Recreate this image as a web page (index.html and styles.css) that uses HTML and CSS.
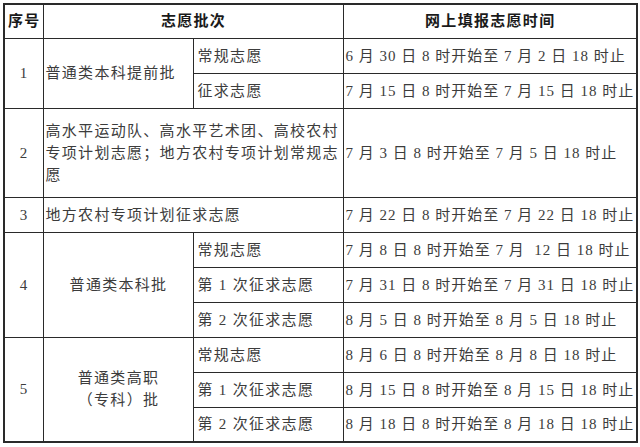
FILE: index.html
```html
<!DOCTYPE html>
<html lang="zh-CN">
<head>
<meta charset="utf-8">
<title>志愿填报时间</title>
<link rel="stylesheet" href="styles.css">
</head>
<body>
<table class="sched">
  <colgroup>
    <col class="c-no">
    <col class="c-batch">
    <col class="c-type">
    <col class="c-time">
  </colgroup>
  <thead>
    <tr class="r-head">
      <th>序号</th>
      <th colspan="2">志愿批次</th>
      <th>网上填报志愿时间</th>
    </tr>
  </thead>
  <tbody>
    <tr class="r-sub">
      <td class="no" rowspan="2">1</td>
      <td class="batch" rowspan="2">普通类本科提前批</td>
      <td class="type">常规志愿</td>
      <td class="time">6 月 30 日 8 时开始至 7 月 2 日 18 时止</td>
    </tr>
    <tr class="r-sub">
      <td class="type">征求志愿</td>
      <td class="time">7 月 15 日 8 时开始至 7 月 15 日 18 时止</td>
    </tr>
    <tr class="r-tall">
      <td class="no">2</td>
      <td class="batch wrap" colspan="2">高水平运动队、高水平艺术团、高校农村专项计划志愿；地方农村专项计划常规志愿</td>
      <td class="time">7 月 3 日 8 时开始至 7 月 5 日 18 时止</td>
    </tr>
    <tr class="r-sub">
      <td class="no">3</td>
      <td class="batch" colspan="2">地方农村专项计划征求志愿</td>
      <td class="time">7 月 22 日 8 时开始至 7 月 22 日 18 时止</td>
    </tr>
    <tr class="r-sub">
      <td class="no" rowspan="3">4</td>
      <td class="batch center" rowspan="3">普通类本科批</td>
      <td class="type">常规志愿</td>
      <td class="time">7 月 8 日 8 时开始至 7 月&nbsp; 12 日 18 时止</td>
    </tr>
    <tr class="r-sub">
      <td class="type">第 1 次征求志愿</td>
      <td class="time">7 月 31 日 8 时开始至 7 月 31 日 18 时止</td>
    </tr>
    <tr class="r-sub">
      <td class="type">第 2 次征求志愿</td>
      <td class="time">8 月 5 日 8 时开始至 8 月 5 日 18 时止</td>
    </tr>
    <tr class="r-sub">
      <td class="no" rowspan="3">5</td>
      <td class="batch center" rowspan="3">普通类高职<br>（专科）批</td>
      <td class="type">常规志愿</td>
      <td class="time">8 月 6 日 8 时开始至 8 月 8 日 18 时止</td>
    </tr>
    <tr class="r-sub">
      <td class="type">第 1 次征求志愿</td>
      <td class="time">8 月 15 日 8 时开始至 8 月 15 日 18 时止</td>
    </tr>
    <tr class="r-sub">
      <td class="type">第 2 次征求志愿</td>
      <td class="time">8 月 18 日 8 时开始至 8 月 18 日 18 时止</td>
    </tr>
  </tbody>
</table>
</body>
</html>
```
FILE: styles.css
```css
html, body {
  margin: 0;
  padding: 0;
  background: #ffffff;
}
body {
  padding: 3px 0 0 3px;
  font-family: "Liberation Serif", "Noto Sans CJK SC", serif;
  font-size: 15px;
  color: #3c3c3c;
}
.sched {
  border-collapse: collapse;
  table-layout: fixed;
  width: 633px;
  border: 2px solid #2a2a2a;
}
.c-no { width: 39px; }
.c-batch { width: 150px; }
.c-type { width: 150px; }
.c-time { width: 294px; }
.sched th,
.sched td {
  border: 1px solid #2a2a2a;
  padding: 0 1px 0 2px;
  vertical-align: middle;
  line-height: 22px;
  letter-spacing: 1.3px;
  white-space: nowrap;
  overflow: hidden;
}
.sched th {
  font-family: "Liberation Serif", "Noto Sans CJK SC", serif;
  font-weight: 700;
  color: #1a1a1a;
  text-align: center;
  font-size: 15px;
}
.r-head { height: 34px; }
.r-sub { height: 35px; }
.r-tall { height: 89px; }
.sched .no { text-align: center; }
.sched .batch { text-align: left; }
.sched .batch.center { text-align: center; }
.sched .batch.wrap { white-space: normal; }
.sched .type { padding-left: 4px; }
.sched .time { letter-spacing: 1px; }
```
